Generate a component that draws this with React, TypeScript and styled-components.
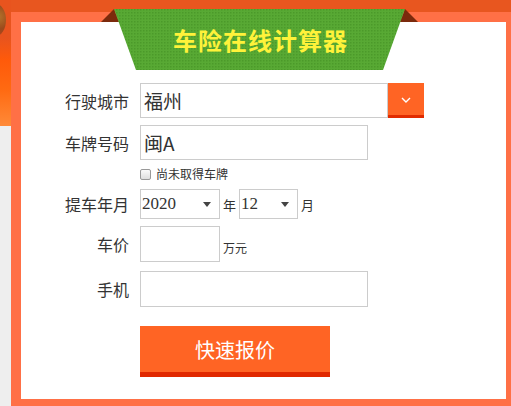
import React from "react";
import styled, {createGlobalStyle} from "styled-components";

const GlobalStyle = createGlobalStyle`
  html, body {
    margin: 0;
    padding: 0;
    background: #eeeeee;
    font-family: "Noto Sans CJK SC", "Noto Sans", sans-serif;
    color: #333;
  }
`

const Page = styled.div`
  position: relative;
  display: flex;
  width: 511px;
  height: 406px;
  overflow: hidden;
`

const LeftDecor = styled.div`
  position: relative;
  width: 11px;
  height: 126px;
  flex-shrink: 0;
  background: linear-gradient(180deg, #e8541e 0, #e8541e 38px, #ff5a0a 60px, #ff6a12 90px, #ff8a38 126px);
  overflow: hidden;
  > .ball{
    position: absolute;
    left: -14px;
    top: 4px;
    width: 20px;
    height: 32px;
    border-radius: 50%;
    background: radial-gradient(circle at 60% 40%, #b4742c 0, #9a4a1c 55%, #c0401a 100%);
  }
`

const Main = styled.div`
  display: flex;
  flex-direction: column;
  flex: 1;
`

const TopBand = styled.div`
  height: 12px;
  background: #e8561f;
`

const Panel = styled.div`
  flex: 1;
  border-style: solid;
  border-color: #ff7046;
  border-width: 10px 5px 7px 10px;
  background: #fff;
`

const Ribbon = styled.div`
  position: absolute;
  left: 101px;
  top: 9px;
  width: 317px;
  height: 61px;
  display: flex;
  align-items: center;
  justify-content: center;
  > svg{
    position: absolute;
    left: 0;
    top: 0;
  }
`

const Title = styled.h1`
  position: relative;
  margin: 0;
  padding-left: 2px;
  font-size: 24px;
  line-height: 28px;
  font-weight: 700;
  color: #fff23a;
  letter-spacing: 1px;
`

const Form = styled.div`
  display: flex;
  flex-direction: column;
  padding-top: 61px;
`

const Row = styled.div<{ $top: number }>`
  display: flex;
  align-items: center;
  margin-top: ${p => p.$top}px;
`

const Label = styled.label`
  width: 108px;
  margin-right: 11px;
  text-align: right;
  font-size: 16px;
  color: #333;
  flex-shrink: 0;
`

const Box = styled.div<{ $w: number, $h: number }>`
  box-sizing: border-box;
  width: ${p => p.$w}px;
  height: ${p => p.$h}px;
  border: 1px solid #cccccc;
  display: flex;
  align-items: center;
  padding-left: 3px;
  font-size: 19px;
  color: #333;
  background: #fff;
`

const CityBox = styled.div`
  display: flex;
  width: 284px;
  height: 35px;
  > .drop{
    width: 36px;
    height: 35px;
    box-sizing: border-box;
    background: #ff6424;
    border-bottom: 3px solid #e12b00;
    display: flex;
    align-items: center;
    justify-content: center;
    padding-top: 2px;
  }
`

const CheckRow = styled.div`
  display: flex;
  align-items: center;
  height: 12px;
  line-height: 12px;
  margin-left: 119px;
  margin-top: 8px;
  font-size: 12px;
  color: #333;
  > .check{
    width: 9px;
    height: 9px;
    border: 1px solid #999;
    border-radius: 2px;
    background: linear-gradient(#fafafa, #dedede);
    margin-right: 5px;
  }
`

const Select = styled.div<{ $w: number }>`
  box-sizing: border-box;
  width: ${p => p.$w}px;
  height: 30px;
  border: 1px solid #cccccc;
  display: flex;
  align-items: center;
  justify-content: space-between;
  padding: 0 8px 0 1px;
  font-family: "Liberation Serif", "Noto Sans CJK SC", serif;
  font-size: 17px;
  color: #333;
  > .arrow{
    width: 0;
    height: 0;
    border-left: 4px solid transparent;
    border-right: 4px solid transparent;
    border-top: 5px solid #444;
  }
`

const Unit = styled.span<{ $size?: number }>`
  font-size: ${p => p.$size || 13}px;
  margin: 0 3px;
  color: #333;
`

const PriceUnit = styled(Unit)`
  align-self: flex-end;
  margin-bottom: 6px;
`

const Submit = styled.button`
  margin-left: 119px;
  margin-top: 19px;
  width: 190px;
  height: 51px;
  box-sizing: border-box;
  border: none;
  border-bottom: 5px solid #e02800;
  background: #ff6424;
  color: #fff;
  font-family: "Noto Sans CJK SC", sans-serif;
  font-size: 20px;
  padding: 0;
  cursor: pointer;
`

const App = () => {
    return (
        <Page>
            <GlobalStyle/>
            <LeftDecor><div className="ball"/></LeftDecor>
            <Main>
                <TopBand/>
                <Panel>
                    <Form>
                        <Row $top={0}>
                            <Label>行驶城市</Label>
                            <CityBox>
                                <Box $w={248} $h={35}>福州</Box>
                                <div className="drop">
                                    <svg width="10" height="6" viewBox="0 0 10 6">
                                        <path d="M1 1 L5 5 L9 1" stroke="#fff" strokeWidth="1.4" fill="none"/>
                                    </svg>
                                </div>
                            </CityBox>
                        </Row>
                        <Row $top={7}>
                            <Label>车牌号码</Label>
                            <Box $w={228} $h={35}>闽A</Box>
                        </Row>
                        <CheckRow>
                            <span className="check"/>
                            <span>尚未取得车牌</span>
                        </CheckRow>
                        <Row $top={9}>
                            <Label>提车年月</Label>
                            <Select $w={80}><span>2020</span><span className="arrow"/></Select>
                            <Unit>年</Unit>
                            <Select $w={59}><span>12</span><span className="arrow"/></Select>
                            <Unit>月</Unit>
                        </Row>
                        <Row $top={7}>
                            <Label>车价</Label>
                            <Box $w={80} $h={36}/>
                            <PriceUnit $size={12}>万元</PriceUnit>
                        </Row>
                        <Row $top={9}>
                            <Label>手机</Label>
                            <Box $w={228} $h={36}/>
                        </Row>
                        <Submit>快速报价</Submit>
                    </Form>
                </Panel>
            </Main>
            <Ribbon>
                <svg width="317" height="61" viewBox="0 0 317 61">
                    <defs>
                        <pattern id="dots" width="3" height="3" patternUnits="userSpaceOnUse">
                            <rect width="3" height="3" fill="#58a934"/>
                            <rect width="1.5" height="1.5" fill="#4b9a2a"/>
                        </pattern>
                    </defs>
                    <polygon points="0,13 13,0 18,13" fill="#7b2a0c"/>
                    <polygon points="317,13 304,0 299,13" fill="#7b2a0c"/>
                    <polygon points="13,0 304,0 282,61 35,61" fill="url(#dots)"/>
                </svg>
                <Title>车险在线计算器</Title>
            </Ribbon>
        </Page>
    )
}

export default App
